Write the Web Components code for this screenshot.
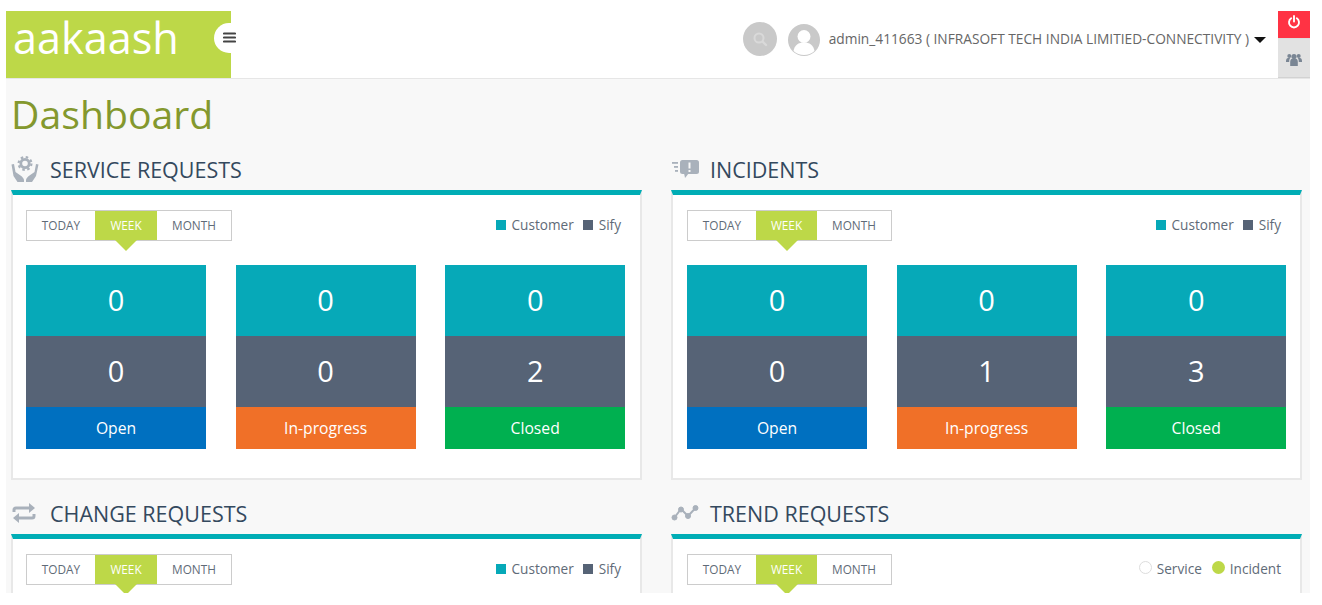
<!DOCTYPE html>
<html><head><meta charset="utf-8">
<style>
html,body{margin:0;padding:0;background:#fff;font-family:"Open Sans",sans-serif;}
body{height:605px;overflow:hidden;}
</style></head><body>
<template id="t-app"><style>
:host{display:flex;flex-direction:column;margin:0 12px 0 6px;padding-top:11px;height:593px;box-sizing:border-box;overflow:hidden;}
main{padding:0 8px 0 5px;flex:1;min-height:0;background:#f8f8f8;}
h1{margin:0 0 2px;height:70px;font:400 39.200px/70px "Open Sans",sans-serif;color:#84982e;}
.grid{display:grid;grid-template-columns:631px 631px;column-gap:29px;row-gap:15px;}
</style><slot name="header"></slot><main><h1>Dashboard</h1><div class="grid"><slot></slot></div></main></template>

<template id="t-header"><style>
:host{display:flex;flex:none;height:68px;background:#fff;border-bottom:1px solid #e6e6e6;box-sizing:border-box;align-items:stretch;}
.logo{width:225px;background:#bdd848;position:relative;color:#fff;font:400 43.200px/54px "Open Sans",sans-serif;padding-left:7px;box-sizing:border-box;}
.menu{position:absolute;right:0;top:12px;width:17px;height:30px;background:#fff;border-radius:15px 0 0 15px;}
.menu svg{position:absolute;left:9px;top:9px}
.right{margin-left:auto;display:flex;align-items:center;padding-bottom:11px;}
.search{width:34px;height:34px;border-radius:50%;background:#c9c9c9;display:flex;align-items:center;justify-content:center;margin-right:11px;}
.avatar{width:32px;height:32px;margin-right:9px;margin-top:2px}
.user{font-size:13.730px;color:#666;white-space:nowrap;margin-top:-2px;}
.caret{width:0;height:0;border:6px solid transparent;border-top:6px solid #111;border-bottom:0;margin:2px 12px 0 5px;}
.side{width:32px;display:flex;flex-direction:column;}
.pw{height:27px;background:#ff3344;display:flex;justify-content:center;padding-top:4px;box-sizing:border-box;}
.us{flex:1;background:#e2e2e2;display:flex;justify-content:center;padding-top:14px;box-sizing:border-box;border-top:1px solid #ddd;border-bottom:1px solid #d2d2d2;}
</style>
<div class="logo">aakaash<div class="menu"><svg width="13" height="12" viewBox="0 0 13 12"><path d="M1 1.500h11M1 5.500h11M1 9.500h11" stroke="#444" stroke-width="2.200" stroke-linecap="round"/></svg></div></div>
<div class="right">
<div class="search"><svg width="16" height="16" viewBox="0 0 16 16"><circle cx="7" cy="7" r="4.500" fill="none" stroke="#d9d9d9" stroke-width="2"/><path d="M10.500 10.500l3.500 3.500" stroke="#d9d9d9" stroke-width="2.400" stroke-linecap="round"/></svg></div>
<svg class="avatar" viewBox="0 0 32 32"><circle cx="16" cy="16" r="16" fill="#c9c9c9"/><circle cx="16" cy="12.500" r="6.500" fill="#fff"/><path d="M5.500 27c1-6 5-8.500 10.500-8.500S25.500 21 26.500 27a15.500 15.500 0 0 1-21 0z" fill="#fff"/></svg>
<span class="user">admin_411663 ( INFRASOFT TECH INDIA LIMITIED-CONNECTIVITY )</span><span class="caret"></span>
</div>
<div class="side"><div class="pw"><svg width="14" height="14" viewBox="0 0 14 14"><path d="M4.200 3.300a5 5 0 1 0 5.600 0" fill="none" stroke="#fff" stroke-width="1.900" stroke-linecap="round"/><path d="M7 1v5.500" stroke="#fff" stroke-width="1.900" stroke-linecap="round"/></svg></div>
<div class="us"><svg width="16" height="14" viewBox="0 0 16 14" fill="#7a8694"><circle cx="3.300" cy="3" r="2"/><circle cx="12.700" cy="3" r="2"/><circle cx="8" cy="3.500" r="2.600"/><path d="M0 8c0-2 1-3 2-3h2.200c-.8 1-1 2-1 4H0zM16 8c0-2-1-3-2-3h-2.200c.8 1 1 2 1 4H16z"/><path d="M4.200 13V9c0-2 1-3.200 2-3.200h3.600c1 0 2 1.200 2 3.200v4z"/></svg></div></div>
</template>

<template id="t-section"><style>
:host{display:block;}
:host([right]){--ww:61px;}
.head{display:flex;align-items:center;height:39px;padding-bottom:3px;box-sizing:border-box;color:#34495e;font-size:21.500px;}
.ic{width:39px;display:flex;align-items:center;justify-content:flex-start;flex:none;}
.card{border-top:5px solid #00adb5;border-left:2px solid #e8e8e8;border-right:2px solid #e8e8e8;border-bottom:2px solid #e8e8e8;background:#fff;padding:15px 14px 0 13px;height:290px;box-sizing:border-box;}
:host([right]) .card{padding:15px 14px 0 14px;}
.top{display:flex;justify-content:space-between;align-items:center;height:31px;margin-bottom:24px;}
</style><div class="head"><span class="ic"><slot name="icon"></slot></span><span><slot name="title"></slot></span></div>
<div class="card"><div class="top"><x-range></x-range><slot name="legend"></slot></div><slot></slot></div></template>

<template id="t-range"><style>
:host{display:flex;height:31px;box-sizing:border-box;border:1px solid #ccc;font-size:11.800px;color:#5f6b78;background:#fff;}
span{display:flex;align-items:center;justify-content:center;padding-bottom:1px;box-sizing:border-box;}
.t{width:68px}.w{width:var(--ww,62px);background:#bdd848;color:#fff;position:relative;}.m{width:74px}
.w::after{content:"";position:absolute;left:50%;top:100%;margin:0 0 0 -11px;border:11px solid transparent;border-top:11px solid #bdd848;border-bottom:0;}
</style><span class="t">TODAY</span><span class="w">WEEK</span><span class="m">MONTH</span></template>

<template id="t-legend"><style>
:host{display:flex;align-items:center;font-size:13.600px;color:#5f6b78;margin:-2px 5px 0 0;}
i{width:10px;height:10px;display:inline-block;margin-right:6px;}
i.a{background:#06a9b8}i.b{background:#566376;margin-left:9px}
i.c,i.d{width:13px;height:13px;border-radius:50%;box-sizing:border-box;margin-right:5px;margin-top:-3px}
i.c{border:1px solid #ddd;background:#fff}i.d{background:#bdd848;margin-left:10px}
</style></template>

<template id="t-tiles"><style>
:host{display:grid;grid-template-columns:repeat(3,180px);column-gap:29.600px;}
</style><slot></slot></template>

<template id="t-tile"><style>
:host{display:flex;flex-direction:column;text-align:center;color:#fff;}
div{display:flex;align-items:center;justify-content:center;box-sizing:border-box;}
.n{height:71px;font-size:29px;padding-bottom:2px;}
.a{background:#06a9b8}.b{background:#566376}
.l{height:42px;font-size:15.700px;background:var(--c);}
</style><div class="n a" id="a"></div><div class="n b" id="b"></div><div class="l" id="l"></div></template>

<script>
function tpl(id){return document.getElementById(id).content.cloneNode(true)}
function def(name,id,init){customElements.define(name,class extends HTMLElement{connectedCallback(){if(this.shadowRoot)return;const s=this.attachShadow({mode:'open'});s.appendChild(tpl(id));init&&init(this,s)}})}
def('x-app','t-app');def('x-header','t-header');def('x-section','t-section');def('x-range','t-range');def('x-tiles','t-tiles');
def('x-legend','t-legend',(h,s)=>{const trend=h.hasAttribute('trend');const add=(c,txt)=>{const i=document.createElement('i');i.className=c;s.appendChild(i);s.appendChild(document.createTextNode(txt))};
 if(trend){add('c','Service');add('d','Incident')}else{add('a','Customer');add('b','Sify')}});
def('x-tile','t-tile',(h,s)=>{s.getElementById('a').textContent=h.getAttribute('a');s.getElementById('b').textContent=h.getAttribute('b');s.getElementById('l').textContent=h.getAttribute('label');
 h.style.setProperty('--c',{Open:'#0070c0','In-progress':'#f07028',Closed:'#00b050'}[h.getAttribute('label')])});
</script>

<x-app>
<x-header slot="header"></x-header>
<x-section>
<svg slot="icon" width="28" height="26" viewBox="0 0 28 26" fill="#a9b1bb"><circle cx="14" cy="7.500" r="4.200" fill="none" stroke="#a9b1bb" stroke-width="2.800"/><circle cx="14" cy="7.500" r="6.400" fill="none" stroke="#a9b1bb" stroke-width="2.200" stroke-dasharray="2.500 2.520"/><path d="M.5 8.500l2.500-.5 1.500 8 5 3.500c2 1.500 3.200 2.800 3.500 4.500v2H6.500L2.500 20z"/><path d="M27.500 8.500l-2.500-.5-1.500 8-5 3.500c-2 1.500-3.200 2.800-3.500 4.500v2h6l4-6z"/></svg>
<span slot="title">SERVICE REQUESTS</span><x-legend slot="legend"></x-legend>
<x-tiles><x-tile a="0" b="0" label="Open"></x-tile><x-tile a="0" b="0" label="In-progress"></x-tile><x-tile a="0" b="2" label="Closed"></x-tile></x-tiles>
</x-section>
<x-section right>
<svg slot="icon" width="28" height="20" viewBox="0 0 28 20" fill="#a9b1bb"><rect x="9" y="1" width="19" height="14" rx="2.500"/><path d="M13 14h5l-4 5z"/><rect x="1" y="3" width="6" height="1.800"/><rect x="3" y="7" width="4" height="1.800"/><rect x="4" y="11" width="3" height="1.800"/><rect x="17.500" y="3.500" width="2" height="6" fill="#f8f8f8"/><rect x="17.500" y="11" width="2" height="2" fill="#f8f8f8"/></svg>
<span slot="title">INCIDENTS</span><x-legend slot="legend"></x-legend>
<x-tiles><x-tile a="0" b="0" label="Open"></x-tile><x-tile a="0" b="1" label="In-progress"></x-tile><x-tile a="0" b="3" label="Closed"></x-tile></x-tiles>
</x-section>
<x-section>
<svg slot="icon" width="26" height="22" viewBox="0 0 26 22" fill="none" stroke="#a9b1bb" stroke-width="3"><path d="M3 10V8c0-1 .5-2 2-2h16"/><path d="M23 12v2c0 1-.5 2-2 2H5"/><path d="M18 1l6 5-6 5z" fill="#a9b1bb" stroke="none"/><path d="M8 11l-6 5 6 5z" fill="#a9b1bb" stroke="none"/></svg>
<span slot="title">CHANGE REQUESTS</span><x-legend slot="legend"></x-legend>
</x-section>
<x-section right>
<svg slot="icon" width="28" height="16" viewBox="0 0 28 16" fill="#a9b1bb" stroke="#a9b1bb"><path d="M3.500 12.500L10 4l7 7 7.500-8" fill="none" stroke-width="2"/><circle cx="3.500" cy="12.500" r="2.500"/><circle cx="10" cy="4.500" r="2.500"/><circle cx="17" cy="11" r="2.500"/><circle cx="24.500" cy="3" r="2.500"/></svg>
<span slot="title">TREND REQUESTS</span><x-legend slot="legend" trend></x-legend>
</x-section>
</x-app>
</body></html>
